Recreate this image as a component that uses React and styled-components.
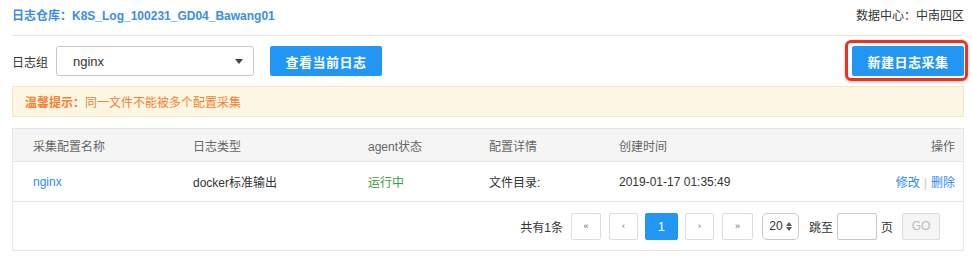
import React from "react";
import styled, { createGlobalStyle } from "styled-components";

const GlobalStyle = createGlobalStyle`
  body {
    margin: 0;
    background: #fff;
    font-family: "Liberation Sans", "Noto Sans CJK SC", sans-serif;
    font-size: 12px;
    color: #333;
  }
  * { box-sizing: border-box; }
`;

const Page = styled.div`
  width: 972px;
  padding: 0 8px 0 12px;
`;

const TopBar = styled.div`
  height: 36px;
  padding-bottom: 6px;
  display: flex;
  align-items: center;
  justify-content: space-between;
  border-bottom: 1px solid #e6e6e6;
`;

const Repo = styled.div`
  font-size: 12px;
  font-weight: bold;
  color: #3a8ee6;
`;

const Region = styled.div`
  font-size: 12px;
  color: #333;
`;

const Toolbar = styled.div`
  display: flex;
  align-items: center;
  padding: 10px 0;
`;

const Label = styled.span`
  margin-right: 8px;
  font-size: 12px;
`;

const Select = styled.div`
  width: 198px;
  height: 30px;
  border: 1px solid #c9c9c9;
  border-radius: 3px;
  display: flex;
  align-items: center;
  justify-content: space-between;
  padding: 0 10px 0 16px;
  font-size: 13px;
  color: #333;
`;

const Caret = styled.span`
  width: 0;
  height: 0;
  border-left: 4px solid transparent;
  border-right: 4px solid transparent;
  border-top: 5px solid #444;
`;

const Button = styled.button`
  position: relative;
  height: 30px;
  width: 112px;
  margin-left: ${(p) => (p.$push ? "auto" : "16px")};
  border: none;
  border-radius: 2px;
  background: #2196f3;
  color: #fff;
  font-family: inherit;
  font-size: 13px;
  font-weight: bold;
  letter-spacing: 0.5px;
  ${(p) =>
    p.$marked &&
    `
    &::after {
      content: "";
      position: absolute;
      top: -6px;
      right: -4px;
      bottom: -5px;
      left: -7px;
      border: 3px solid #ea3323;
      border-radius: 6px;
      box-shadow: 0 1px 3px rgba(0, 0, 0, 0.25);
    }
  `}
`;

const Notice = styled.div`
  height: 31px;
  display: flex;
  align-items: center;
  padding-left: 12px;
  background: #fdf6e4;
  border: 1px solid #fae6c1;
  color: #f5812f;
  font-size: 12px;
  b { font-weight: bold; }
`;

const Table = styled.div`
  margin-top: 11px;
  border: 1px solid #e1e4e8;
`;

const Row = styled.div`
  display: grid;
  grid-template-columns: 160px 175px 121px 130px 1fr auto;
  align-items: center;
  height: ${(p) => (p.$head ? "33px" : "40px")};
  padding: 0 8px 0 20px;
  background: ${(p) => (p.$head ? "#f5f5f5" : "#fff")};
  color: ${(p) => (p.$head ? "#666" : "#333")};
  border-bottom: 1px solid #e1e4e8;
  font-size: 12px;
`;

const Link = styled.span`
  color: #2d8cf0;
`;

const Status = styled.span`
  color: #36a03a;
`;

const Sep = styled.span`
  color: #ccc;
  margin: 0 4px;
`;

const Pager = styled.div`
  height: 48px;
  display: flex;
  align-items: center;
  justify-content: flex-end;
  padding-right: 23px;
  font-size: 12px;
`;

const PageBtn = styled.div`
  height: 27px;
  width: ${(p) => p.$w}px;
  margin-left: ${(p) => p.$ml ?? 8}px;
  display: flex;
  align-items: center;
  justify-content: center;
  border: 1px solid ${(p) => (p.$active ? "#2196f3" : "#ddd")};
  border-radius: 2px;
  background: ${(p) => (p.$active ? "#2196f3" : "#fff")};
  color: ${(p) => (p.$active ? "#fff" : "#667")};
  font-size: ${(p) => (p.$active ? "13px" : "9px")};
`;

const SizeSelect = styled.div`
  height: 27px;
  width: 37px;
  margin-left: 9px;
  border: 1px solid #c9c9c9;
  border-radius: 5px;
  display: flex;
  align-items: center;
  justify-content: center;
  gap: 3px;
  font-size: 12px;
  color: #333;
`;

const Spinner = styled.span`
  display: flex;
  flex-direction: column;
  gap: 1px;
  i {
    width: 0;
    height: 0;
    border-left: 3px solid transparent;
    border-right: 3px solid transparent;
  }
  i:first-child { border-bottom: 4px solid #555; }
  i:last-child { border-top: 4px solid #555; }
`;

const Text = styled.span`
  margin-left: ${(p) => p.$ml ?? 0}px;
  color: #333;
`;

const Input = styled.div`
  height: 27px;
  width: 40px;
  margin-left: 4px;
  border: 1px solid #c9c9c9;
  border-radius: 2px;
`;

const Go = styled.div`
  height: 27px;
  width: 38px;
  margin-left: 9px;
  border: 1px solid #ddd;
  border-radius: 2px;
  background: #f5f5f5;
  color: #bbb;
  font-size: 12px;
  display: flex;
  align-items: center;
  justify-content: center;
`;

export default function App() {
  return (
    <Page>
      <GlobalStyle />
      <TopBar>
        <Repo>日志仓库：K8S_Log_100231_GD04_Bawang01</Repo>
        <Region>数据中心：中南四区</Region>
      </TopBar>
      <Toolbar>
        <Label>日志组</Label>
        <Select>
          nginx
          <Caret />
        </Select>
        <Button>查看当前日志</Button>
        <Button $push $marked>新建日志采集</Button>
      </Toolbar>
      <Notice>
        <b>温馨提示：</b>同一文件不能被多个配置采集
      </Notice>
      <Table>
        <Row $head>
          <span>采集配置名称</span>
          <span>日志类型</span>
          <span>agent状态</span>
          <span>配置详情</span>
          <span>创建时间</span>
          <span>操作</span>
        </Row>
        <Row>
          <Link>nginx</Link>
          <span>docker标准输出</span>
          <Status>运行中</Status>
          <span>文件目录:</span>
          <span>2019-01-17 01:35:49</span>
          <span>
            <Link>修改</Link>
            <Sep>|</Sep>
            <Link>删除</Link>
          </span>
        </Row>
        <Pager>
          <Text>共有1条</Text>
          <PageBtn $w={30}>«</PageBtn>
          <PageBtn $w={29}>‹</PageBtn>
          <PageBtn $w={33} $ml={7} $active>1</PageBtn>
          <PageBtn $w={29} $ml={7}>›</PageBtn>
          <PageBtn $w={31}>»</PageBtn>
          <SizeSelect>
            20
            <Spinner>
              <i />
              <i />
            </Spinner>
          </SizeSelect>
          <Text $ml={10}>跳至</Text>
          <Input />
          <Text $ml={4}>页</Text>
          <Go>GO</Go>
        </Pager>
      </Table>
    </Page>
  );
}
